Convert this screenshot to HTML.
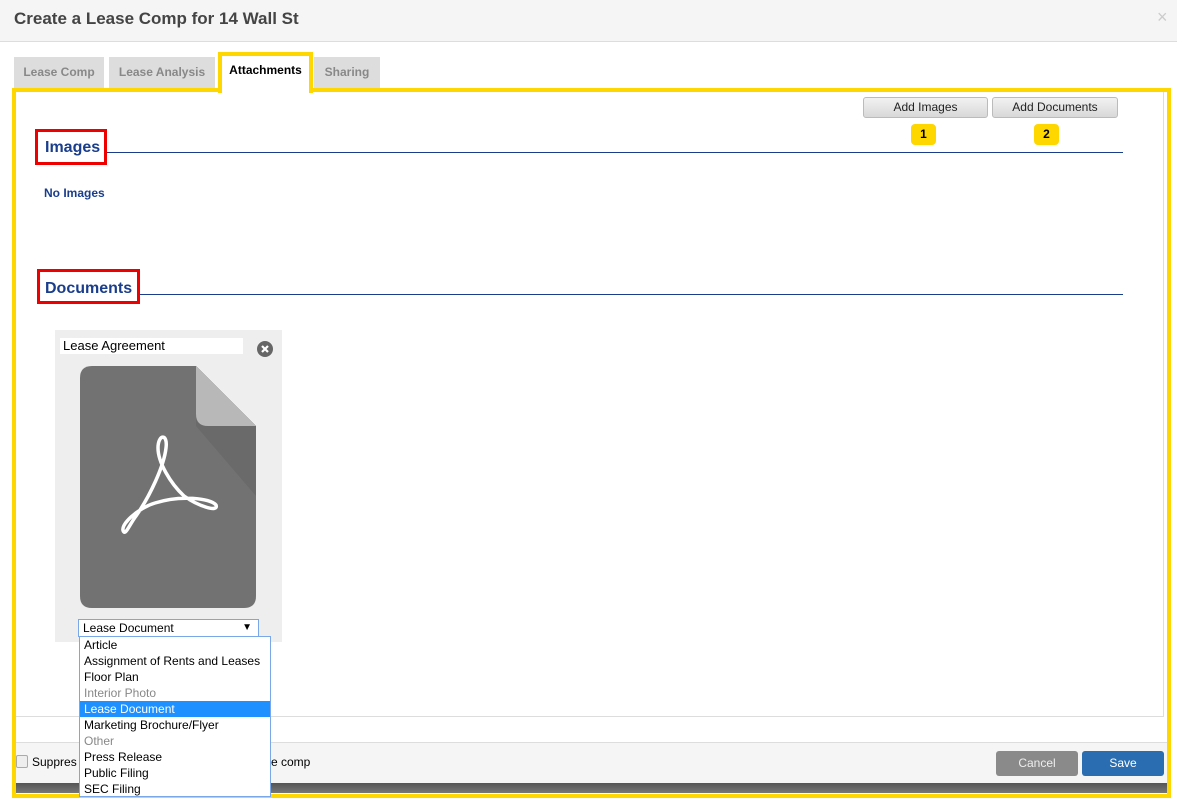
<!DOCTYPE html>
<html><head><style>
*{box-sizing:border-box;margin:0;padding:0}
body{width:1177px;height:801px;position:relative;overflow:hidden;background:#fff;font-family:"Liberation Sans",Arial,sans-serif}
.a{position:absolute}
.tab{position:absolute;top:57px;height:31px;background:#ddd;color:#888;font-weight:bold;font-size:12px;text-align:center;line-height:30px}
.btn{position:absolute;top:97px;height:21px;border:1px solid #bbb;border-radius:3px;background:linear-gradient(#f2f2f2,#d8d8d8);font-size:12px;text-align:center;line-height:19px;color:#222}
.badge{position:absolute;top:124px;width:25px;height:21px;background:#ffd700;border-radius:4px;font-size:12px;font-weight:bold;text-align:center;line-height:21px}
.dd div{height:16px;line-height:16px;padding-left:4px;font-size:12px;color:#000}
</style></head><body>
<div class="a" style="left:0;top:0;width:1177px;height:42px;background:#f5f5f5;border-bottom:1px solid #ddd"></div>
<div class="a" style="left:14px;top:9px;font-size:17px;font-weight:bold;color:#444">Create a Lease Comp for 14 Wall St</div>
<div class="a" style="left:1157px;top:7px;font-size:18px;color:#ccc">×</div>
<div class="tab" style="left:14px;width:90px">Lease Comp</div>
<div class="tab" style="left:109px;width:106px">Lease Analysis</div>
<div class="tab" style="left:314px;width:66px">Sharing</div>
<div class="a" style="left:12px;top:88px;width:1159px;height:710px;border:4px solid #ffd700;background:#fff"></div>
<div class="a" style="left:218px;top:52px;width:95px;height:41px;border:4px solid #ffd700;border-bottom:none;background:#fff;font-size:12px;font-weight:bold;text-align:center;line-height:28px;color:#000">Attachments</div>
<div class="a" style="left:1163px;top:92px;width:1px;height:624px;background:#ddd"></div>
<div class="a" style="left:16px;top:716px;width:1148px;height:1px;background:#ddd"></div>
<div class="a" style="left:16px;top:742px;width:1151px;height:41px;background:#f5f5f5;border-top:1px solid #ddd"></div>
<div class="a" style="left:16px;top:783px;width:1151px;height:10px;background:linear-gradient(#555,#777)"></div>
<div class="btn" style="left:863px;width:125px">Add Images</div>
<div class="btn" style="left:992px;width:126px">Add Documents</div>
<div class="badge" style="left:911px">1</div>
<div class="badge" style="left:1034px">2</div>
<div class="a" style="left:106px;top:152px;width:1017px;height:1px;background:#1a3e8c"></div>
<div class="a" style="left:35px;top:129px;width:72px;height:36px;border:3px solid #e00;color:#1a3e8c;font-size:16px;font-weight:bold;padding:7px 0 0 7px">Images</div>
<div class="a" style="left:44px;top:186px;font-size:12px;font-weight:bold;color:#1a3e8c">No Images</div>
<div class="a" style="left:139px;top:294px;width:984px;height:1px;background:#1a3e8c"></div>
<div class="a" style="left:37px;top:269px;width:103px;height:35px;border:3px solid #e00;color:#1a3e8c;font-size:16px;font-weight:bold;padding:8px 0 0 5px">Documents</div>
<div class="a" style="left:55px;top:330px;width:227px;height:312px;background:#eee"></div>
<div class="a" style="left:60px;top:338px;width:183px;height:16px;background:#fff;font-size:13px;line-height:16px;padding-left:3px">Lease Agreement</div>
<svg class="a" style="left:256px;top:340px" width="18" height="18"><circle cx="9" cy="9" r="8" fill="#666"/><path d="M6 6L12 12M12 6L6 12" stroke="#fff" stroke-width="2.2"/></svg>
<svg class="a" style="left:80px;top:366px" width="176" height="242">
<path d="M12 0H116L176 60V230Q176 242 164 242H12Q0 242 0 230V12Q0 0 12 0Z" fill="#727272"/>
<path d="M116 0L176 60V130L116 60Z" fill="#6a6a6a"/>
<path d="M116 0L176 60H128Q116 60 116 48Z" fill="#b8b8b8"/>
<path d="M44 166C38 160 58 142 75 137C100 129 130 132 136 139C139 147 118 140 104 130C90 117 78 96 78 82C78 68 88 67 86 82C84 100 70 130 56 150C50 158 46 168 44 166Z" fill="none" stroke="#fff" stroke-width="3.5" stroke-linejoin="round"/>
</svg>
<div class="a" style="left:78px;top:619px;width:181px;height:18px;border:1px solid #7aa7e8;background:#fff;font-size:12px;line-height:16px;padding-left:4px">Lease Document<span style="position:absolute;right:6px;font-size:10px">▼</span></div>
<div class="a dd" style="left:79px;top:636px;width:192px;height:161px;border:1px solid #7aa7e8;background:#fff;overflow:hidden">
<div>Article</div><div>Assignment of Rents and Leases</div><div>Floor Plan</div><div style="color:#888">Interior Photo</div><div style="background:#1e90ff;color:#fff">Lease Document</div><div>Marketing Brochure/Flyer</div><div style="color:#888">Other</div><div>Press Release</div><div>Public Filing</div><div>SEC Filing</div></div>
<div class="a" style="left:16px;top:755px;width:12px;height:13px;border:1px solid #aaa;border-radius:2px;background:#eee"></div>
<div class="a" style="left:32px;top:755px;font-size:12px">Suppres</div>
<div class="a" style="left:271px;top:755px;font-size:12px">e comp</div>
<div class="a" style="left:996px;top:751px;width:82px;height:25px;background:#8a8a8a;border-radius:3px;color:#eee;font-size:12px;text-align:center;line-height:25px">Cancel</div>
<div class="a" style="left:1082px;top:751px;width:82px;height:25px;background:#2a6db0;border-radius:3px;color:#fff;font-size:12px;text-align:center;line-height:25px">Save</div>
</body></html>
